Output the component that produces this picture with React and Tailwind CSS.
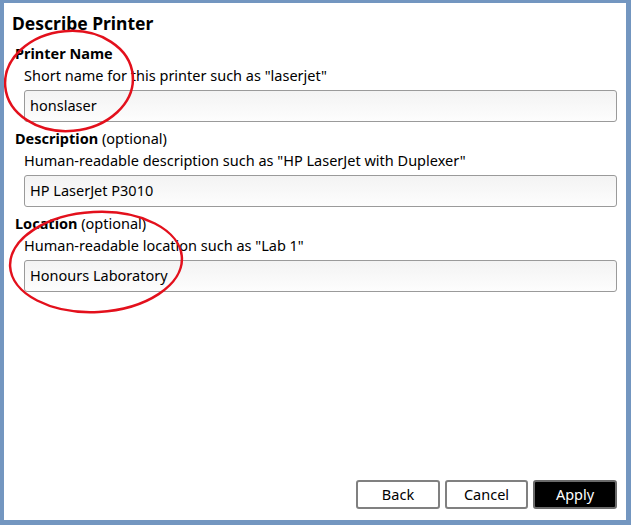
import React from 'react';

const font = { fontFamily: '"Noto Sans", "Open Sans", sans-serif' };

const Field = ({ label, optional, hint, value, first }) => (
    <div className={`flex flex-col ${first ? 'mt-[10px]' : 'mt-[7px]'}`}>
        <div className="pl-[11px] text-[14.5px] leading-[18px] text-black">
            <span className="font-bold">{label}</span>
            {optional && <span> (optional)</span>}
        </div>
        <div className="pl-[20px] mt-[4px] text-[14.5px] leading-[18px] text-black">{hint}</div>
        <div className="ml-[20px] mr-[9px] mt-[6px] h-[32px] rounded-[3px] border border-[#9a9a9a] bg-gradient-to-b from-[#f3f3f3] to-[#fdfdfd] flex items-center px-[5px] text-[14.5px] text-black">
            {value}
        </div>
    </div>
);

export default function App() {
    return (
        <div style={font} className="w-[631px] h-[525px] bg-[#7396c0] pt-[3px] pl-[4px] pr-[5px] pb-[5px]">
            <div className="relative h-full bg-white flex flex-col">
                <h1 className="pl-[8px] pt-[9px] text-[17.5px] leading-[22px] font-bold text-black">Describe Printer</h1>

                <Field first label="Printer Name" hint={'Short name for this printer such as "laserjet"'} value="honslaser" />
                <Field label="Description" optional hint={'Human-readable description such as "HP LaserJet with Duplexer"'} value="HP LaserJet P3010" />
                <Field label="Location" optional hint={'Human-readable location such as "Lab 1"'} value="Honours Laboratory" />

                <div className="mt-auto mb-[11px] mr-[9px] flex justify-end gap-[5px] text-[14.5px]">
                    <button className="w-[84px] h-[29px] rounded-[3px] border-2 border-[#808080] bg-white text-black">Back</button>
                    <button className="w-[83px] h-[29px] rounded-[3px] border-2 border-[#808080] bg-white text-black">Cancel</button>
                    <button className="w-[84px] h-[29px] rounded-[3px] border-2 border-[#6a6a6a] bg-black text-white">Apply</button>
                </div>

                {/* red annotation circles */}
                <svg className="absolute left-0 top-0 pointer-events-none" width="622" height="517">
                    <ellipse cx="65" cy="78" rx="64" ry="50" fill="none" stroke="#e3101c" strokeWidth="2.5" transform="rotate(-5 65 78)" />
                    <ellipse cx="92" cy="259" rx="86" ry="50" fill="none" stroke="#e3101c" strokeWidth="2.5" transform="rotate(-3 92 259)" />
                </svg>
            </div>
        </div>
    );
}
